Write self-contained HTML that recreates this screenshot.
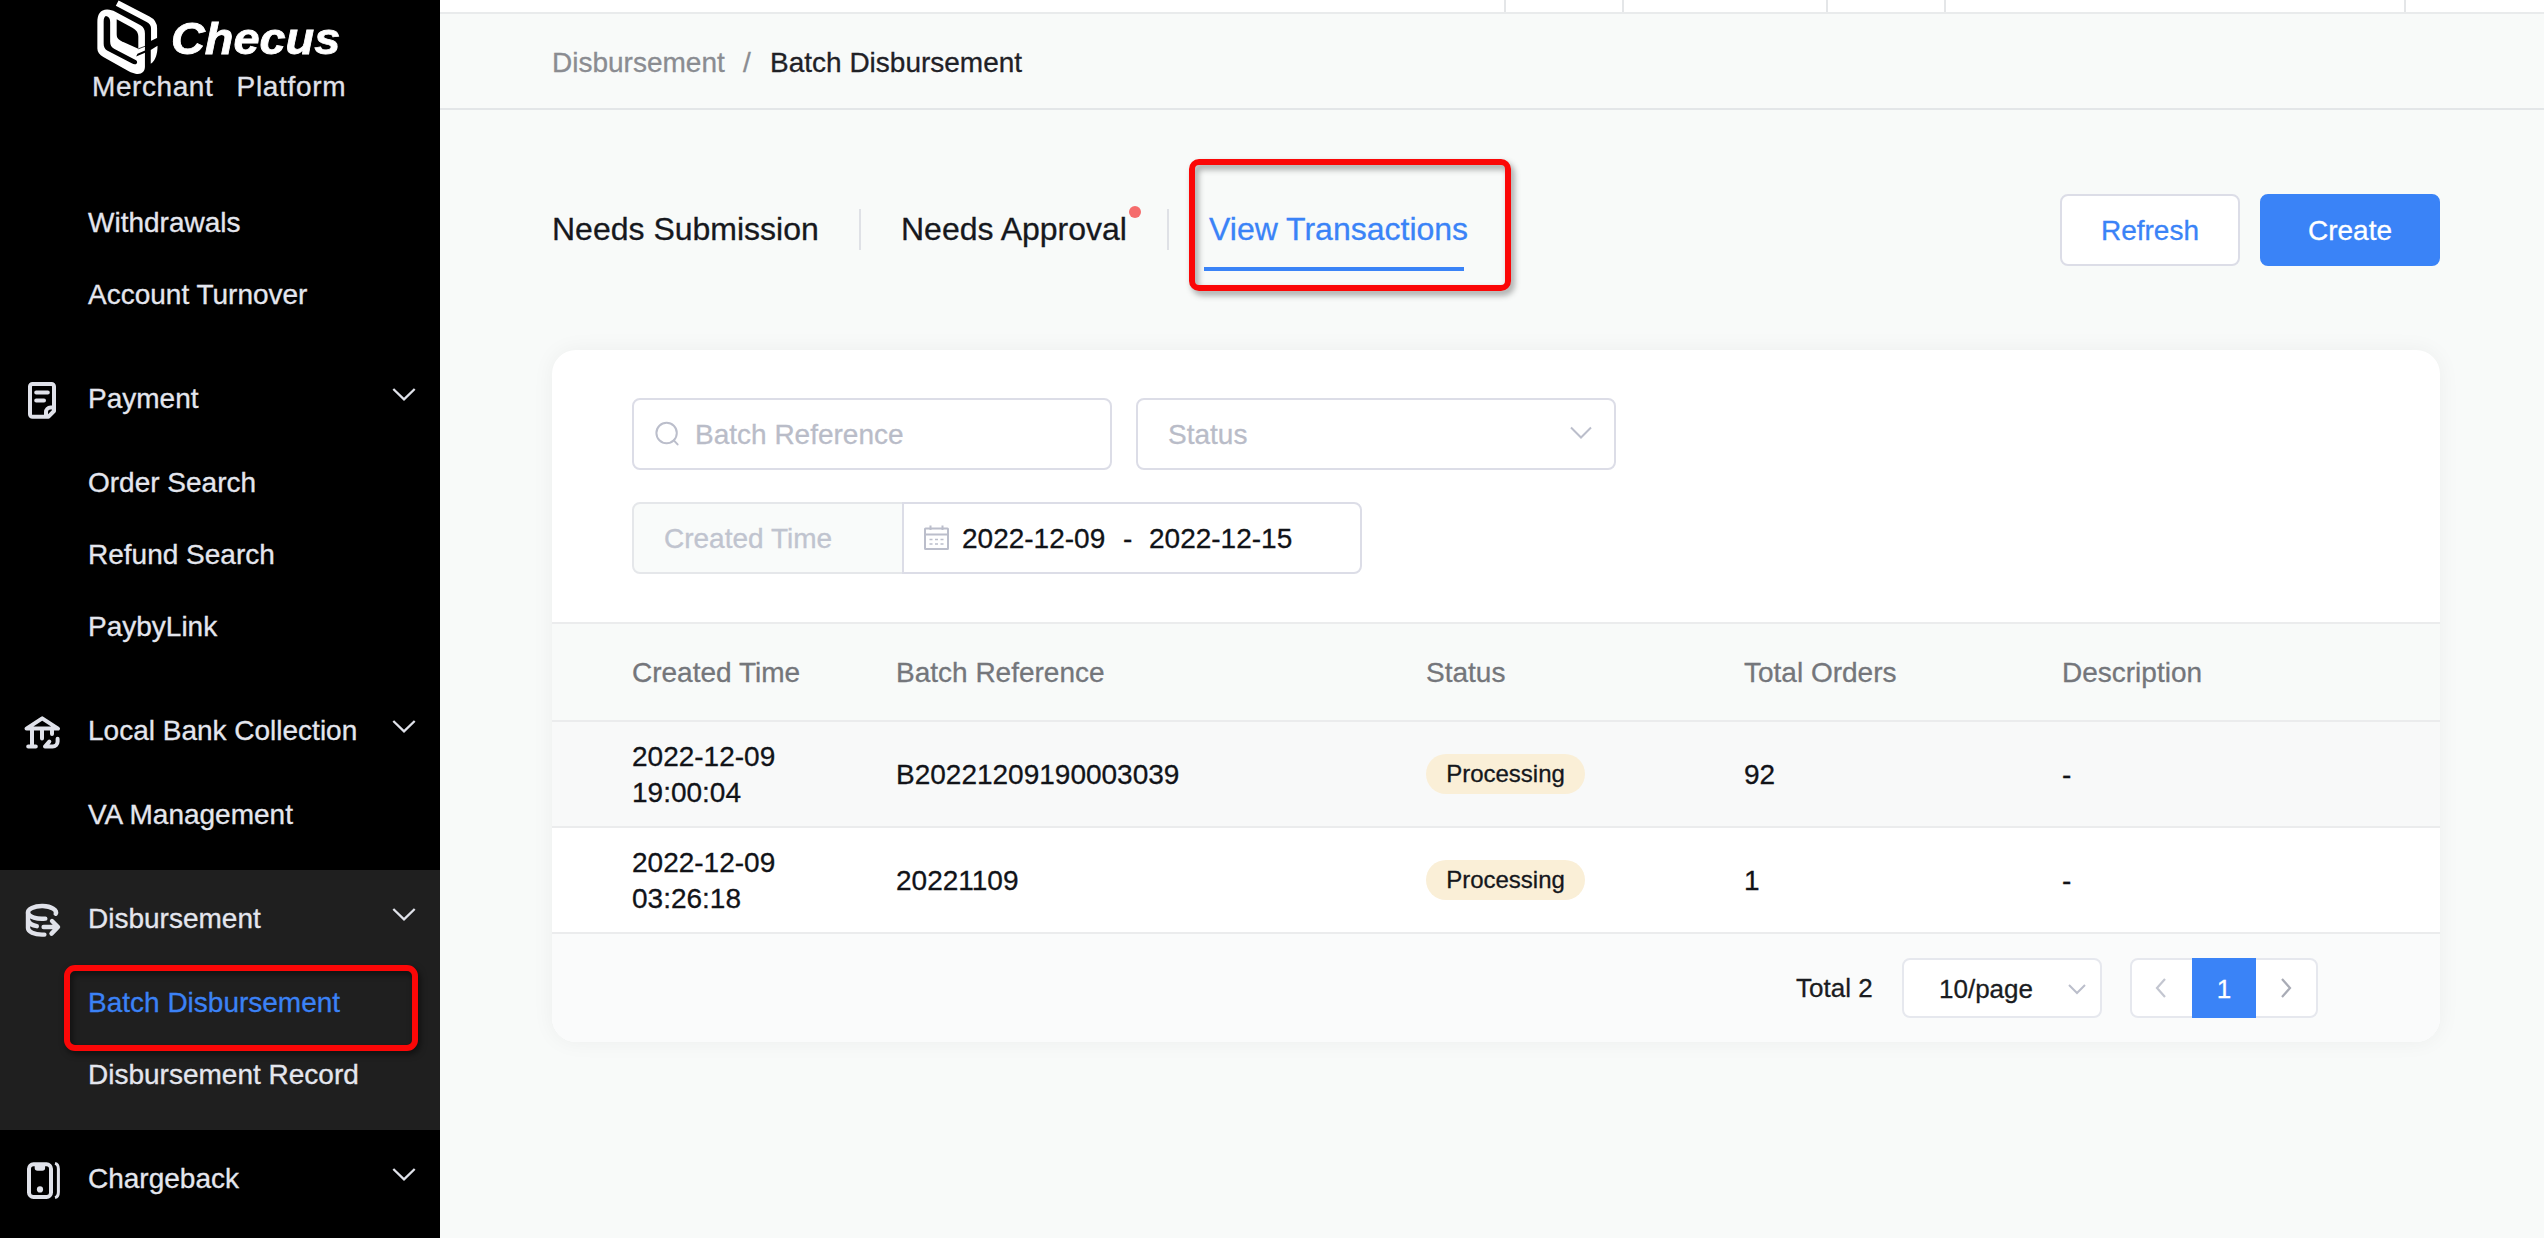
<!DOCTYPE html>
<html lang="en">
<head>
<meta charset="utf-8">
<title>Batch Disbursement</title>
<style>
*{box-sizing:border-box;margin:0;padding:0}
html,body{width:2544px;height:1238px;overflow:hidden;background:#f8faf9;font-family:"Liberation Sans",sans-serif;color:#1a1c21;-webkit-text-stroke:.3px}
.abs{position:absolute}
#side{position:absolute;left:0;top:0;width:440px;height:1238px;background:#000;overflow:hidden}
#active-bg{position:absolute;left:0;top:870px;width:440px;height:260px;background:#1f1f1f}
.m,.s{position:absolute;left:88px;font-size:28px;line-height:40px;height:40px;color:#e4e6ee;white-space:nowrap}
.chev{position:absolute;left:391px;width:26px;height:16px}
.ico{position:absolute}
#main{position:absolute;left:440px;top:0;width:2104px;height:1238px;background:#f8faf9}
#topstrip{position:absolute;left:0;top:0;width:2104px;height:14px;background:#fff;border-bottom:2px solid #e9ebec}
.vs{position:absolute;top:0;width:2px;height:12px;background:#e4e6e8}
#crumb{position:absolute;left:0;top:13px;width:2104px;height:97px;border-bottom:2px solid #e3e6e8}
#crumb span{position:absolute;top:30px;font-size:28px;line-height:40px;white-space:nowrap}
.tab{position:absolute;top:206px;font-size:32px;line-height:46px;white-space:nowrap;color:#16181d}
.tsep{position:absolute;top:209px;width:2px;height:41px;background:#dfe1e6}
.btn{position:absolute;top:194px;height:72px;border-radius:8px;font-size:28px;line-height:70px;text-align:center}
#card{position:absolute;left:112px;top:350px;width:1888px;height:692px;background:#fff;border-radius:24px;box-shadow:0 0 22px rgba(10,20,15,.05);overflow:hidden}
.inp{position:absolute;height:72px;border:2px solid #dcdde7;border-radius:8px;background:#fff;font-size:28px;line-height:70px;color:#b9bcc8;white-space:nowrap}
.th,.td{position:absolute;font-size:28px;line-height:36px;white-space:nowrap}
.th{color:#74767b}
.td{color:#111318}
.hl{position:absolute;left:0;width:1888px;height:2px;background:#ebeced}
.tag{position:absolute;left:874px;width:159px;height:40px;border-radius:20px;background:#faefd7;font-size:24px;line-height:40px;text-align:center;color:#15171c}
</style>
</head>
<body>
<div id="side">
  <div id="active-bg"></div>

  <svg class="abs" style="left:92px;top:0;width:70px;height:78px" viewBox="0 0 1111 1238">
    <path d="M400 50 L890 305 Q985 352 985 450 L985 660" fill="none" stroke="#fff" stroke-width="96" stroke-linecap="butt" stroke-linejoin="round"/>
    <path d="M905 700 L1060 622" fill="none" stroke="#000" stroke-width="62"/>
    <path d="M932 792 L1040 726 C1040 850 1010 960 932 1012 Z" fill="#fff"/>
    <path d="M85 350 C85 230 130 150 240 150 C290 150 330 165 370 185 L770 400 C820 430 840 470 840 530 L840 1060 C840 1140 780 1190 690 1170 C660 1165 620 1150 590 1135 L180 905 C120 870 85 830 85 770 Z" fill="#fff"/>
    <path d="M222 255 C270 265 288 300 288 350 L288 660 C288 720 310 750 350 772 L700 955 C725 975 720 1010 695 1018 C675 1025 655 1018 630 1005 L240 800 C200 775 185 740 185 690 L185 340 C185 290 200 262 222 255 Z" fill="#000"/>
    <path d="M392 305 L640 440 C710 480 735 520 735 590 L735 775 L470 655 C410 625 392 600 392 540 Z" fill="#000"/>
    <path d="M700 895 L722 852 L842 800 L842 838 Z" fill="#000"/>
    <path d="M735 775 L842 735" fill="none" stroke="#000" stroke-width="12"/>
  </svg>
  <div id="brand" class="abs" style="left:171px;top:12.5px;font-size:44px;line-height:52px;font-weight:bold;font-style:italic;color:#fff;white-space:nowrap;transform-origin:0 0;transform:scaleX(1.065);-webkit-text-stroke:.8px #fff">Checus</div>
  <div id="mp1" class="abs" style="left:92px;top:67px;font-size:28px;line-height:40px;color:#e0e2ea;white-space:nowrap;letter-spacing:.58px">Merchant</div>
  <div id="mp2" class="abs" style="left:236.6px;top:67px;font-size:28px;line-height:40px;color:#e0e2ea;white-space:nowrap;letter-spacing:.66px">Platform</div>

  <svg class="abs" style="left:20px;top:376px;width:44px;height:48px" viewBox="20 376 44 48" fill="none" stroke="#e0e2ea" stroke-width="4" stroke-linecap="round" stroke-linejoin="round">
    <path d="M46 416.7 H32.5 a2.5 2.5 0 0 1 -2.5 -2.5 V386.5 a2.5 2.5 0 0 1 2.5 -2.5 H51.5 a2.5 2.5 0 0 1 2.5 2.5 V411 L48.5 416.7 H46 V412 a4.5 4.5 0 0 1 4.5 -4.5 H54"/>
    <path d="M36.2 392.5 H47.8 M36.2 400.5 H44"/>
  </svg>
  <svg class="abs" style="left:20px;top:708px;width:44px;height:48px" viewBox="20 708 44 48" fill="none" stroke="#e0e2ea" stroke-width="4" stroke-linecap="round" stroke-linejoin="round">
    <path d="M26.5 728.6 L42.2 718.4 L58 728.6 Z"/>
    <path d="M32 730 V746 M28.2 746.4 H35.8 M42 730 V738.5 M52 730 V734"/>
    <path d="M57.6 738.8 V741.5 a5 5 0 0 1 -5 5 H45 L49.3 741.6"/>
  </svg>
  <svg class="abs" style="left:20px;top:896px;width:44px;height:48px" viewBox="20 896 44 48" fill="none" stroke="#e0e2ea" stroke-width="4.4" stroke-linecap="round" stroke-linejoin="round">
    <path d="M55.69 913.73 A14 6.4 0 1 0 45.30 918.62"/>
    <path d="M28 912.4 V928 A14 6.6 0 0 0 42 934.6 H44.4"/>
    <path d="M28.6 921.5 A14 6.6 0 0 0 36.8 926.2"/>
    <path d="M43.6 927 H57 M52 921 L58 927 L51.5 933.6"/>
  </svg>
  <svg class="abs" style="left:20px;top:1156px;width:44px;height:48px" viewBox="20 1156 44 48" fill="none" stroke="#e0e2ea" stroke-width="4" stroke-linecap="round" stroke-linejoin="round">
    <rect x="29" y="1164.3" width="22" height="32.6" rx="4.5"/>
    <path d="M34.7 1164 H45.1 V1168 a2.8 2.8 0 0 1 -2.8 2.8 H37.5 a2.8 2.8 0 0 1 -2.8 -2.8 Z" fill="#e0e2ea" stroke="none"/>
    <circle cx="40" cy="1189.4" r="3.1" fill="#e0e2ea" stroke="none"/>
    <path d="M55 1163.4 Q58.4 1164.2 58.4 1169 V1192 Q58.4 1196.8 55 1197.6" stroke-width="3" stroke-linecap="butt"/>
  </svg>
  <svg class="abs" style="left:388px;top:384px;width:32px;height:20px" viewBox="388 384 32 20" fill="none" stroke="#e0e2ea" stroke-width="2.3"><path d="M393.3 389 L404 399.3 L414.7 389"/></svg>
  <svg class="abs" style="left:388px;top:716px;width:32px;height:20px" viewBox="388 716 32 20" fill="none" stroke="#e0e2ea" stroke-width="2.3"><path d="M393.3 721 L404 731.3 L414.7 721"/></svg>
  <svg class="abs" style="left:388px;top:904px;width:32px;height:20px" viewBox="388 904 32 20" fill="none" stroke="#e0e2ea" stroke-width="2.3"><path d="M393.3 909 L404 919.3 L414.7 909"/></svg>
  <svg class="abs" style="left:388px;top:1164px;width:32px;height:20px" viewBox="388 1164 32 20" fill="none" stroke="#e0e2ea" stroke-width="2.3"><path d="M393.3 1169 L404 1179.3 L414.7 1169"/></svg>
  <div id="red1" class="abs" style="left:64px;top:965px;width:354px;height:86px;border:6px solid #fb0707;border-radius:11px;filter:drop-shadow(2px 3px 3px rgba(0,0,0,.55))"></div>
  <div class="m" style="top:203px">Withdrawals</div>
  <div class="m" style="top:275px">Account Turnover</div>
  <div class="m" style="top:379px">Payment</div>
  <div class="s" style="top:463px">Order Search</div>
  <div class="s" style="top:535px">Refund Search</div>
  <div class="s" style="top:607px">PaybyLink</div>
  <div class="m" style="top:711px">Local Bank Collection</div>
  <div class="s" style="top:795px">VA Management</div>
  <div class="m" style="top:899px">Disbursement</div>
  <div class="s" style="top:983px;color:#3b82f6">Batch Disbursement</div>
  <div class="s" style="top:1055px">Disbursement Record</div>
  <div class="m" style="top:1159px">Chargeback</div>
</div>
<div id="main">
  <div id="topstrip"><div class="vs" style="left:1064px"></div><div class="vs" style="left:1182px"></div><div class="vs" style="left:1386px"></div><div class="vs" style="left:1504px"></div><div class="vs" style="left:1964px"></div></div>
  <div id="crumb">
    <span id="bc1" style="left:112px;color:#8a8c91">Disbursement</span>
    <span id="bc2" style="left:303px;color:#8a8c91">/</span>
    <span id="bc3" style="left:330px;color:#1f2126">Batch Disbursement</span>
  </div>
  <div id="t1" class="tab" style="left:112px">Needs Submission</div>
  <div class="tsep" style="left:419px"></div>
  <div id="t2" class="tab" style="left:461px">Needs Approval</div>
  <div class="abs" style="left:689px;top:206px;width:12px;height:12px;border-radius:6px;background:#f56c6c"></div>
  <div class="tsep" style="left:727px"></div>
  <div id="t3" class="tab" style="left:769px;color:#3a83f7">View Transactions</div>
  <div class="abs" style="left:764px;top:267px;width:260px;height:4px;background:#3a83f7"></div>
  <div id="red2" class="abs" style="left:749px;top:159px;width:322px;height:132px;border:6px solid #fb0707;border-radius:10px;filter:drop-shadow(3px 4px 3px rgba(0,0,0,.38))"></div>
  <div id="b1" class="btn" style="left:1620px;width:180px;background:#fff;border:2px solid #dcdde7;color:#3a83f7">Refresh</div>
  <div id="b2" class="btn" style="left:1820px;width:180px;background:#3a83f7;border:2px solid #3a83f7;color:#fff">Create</div>
  <div id="card">
    <div class="inp" style="left:80px;top:48px;width:480px;padding-left:61px"><span id="ph1">Batch Reference</span></div>
    <svg class="abs" style="left:100px;top:70px;width:30px;height:30px" viewBox="0 0 30 30" fill="none" stroke="#bbbecb" stroke-width="2"><circle cx="14.6" cy="13" r="10.2"/><path d="M21.8 20.4 L25.6 24.4" stroke-linecap="round"/></svg>
    <div class="inp" style="left:584px;top:48px;width:480px;padding-left:30px"><span id="ph2">Status</span></div>
    <svg class="abs" style="left:1014px;top:72px;width:30px;height:20px" viewBox="0 0 30 20" fill="none" stroke="#bbbecb" stroke-width="2"><path d="M5 5.5 L15 15.5 L25 5.5"/></svg>
    <div class="inp" style="left:80px;top:152px;width:272px;padding-left:30px;background:#f9fbfa;border-radius:8px 0 0 8px;color:#c0c4cf;border-color:#e5e7ea"><span id="ph3">Created Time</span></div>
    <div class="inp" style="left:350px;top:152px;width:460px;border-radius:0 8px 8px 0;color:#111318"><span id="d1" class="abs" style="left:58px;top:0">2022-12-09</span><span class="abs" style="left:219px;top:0">-</span><span id="d2" class="abs" style="left:245px;top:0">2022-12-15</span></div>
    <svg class="abs" style="left:370px;top:174px;width:28px;height:28px" viewBox="0 0 28 28" fill="none" stroke="#bbbecb" stroke-width="2"><rect x="3" y="4.5" width="23" height="20.5" rx=".5"/><path d="M3 10.5 H26 M8.5 1.5 V6 M20.5 1.5 V6" /><path d="M7.5 15.5 H10.5 M13 15.5 H16 M18.5 15.5 H21.5 M7.5 20 H10.5 M13 20 H16 M18.5 20 H21.5" stroke-width="1.6"/></svg>

    <div class="abs" style="left:0;top:274px;width:1888px;height:96px;background:#f8faf9"></div>
    <div class="abs" style="left:0;top:372px;width:1888px;height:104px;background:#f8f9f9"></div>
    <div class="abs" style="left:0;top:584px;width:1888px;height:108px;background:#fafbfb"></div>
    <div class="hl" style="top:272px"></div>
    <div class="hl" style="top:370px"></div>
    <div class="hl" style="top:476px"></div>
    <div class="hl" style="top:582px"></div>

    <div class="th" style="left:80px;top:305px">Created Time</div>
    <div class="th" style="left:344px;top:305px">Batch Reference</div>
    <div class="th" style="left:874px;top:305px">Status</div>
    <div class="th" style="left:1192px;top:305px">Total Orders</div>
    <div class="th" style="left:1510px;top:305px">Description</div>

    <div class="td" style="left:80px;top:389px">2022-12-09<br>19:00:04</div>
    <div class="td" style="left:344px;top:407px">B20221209190003039</div>
    <div class="tag" style="top:404px">Processing</div>
    <div class="td" style="left:1192px;top:407px">92</div>
    <div class="td" style="left:1510px;top:407px">-</div>

    <div class="td" style="left:80px;top:495px">2022-12-09<br>03:26:18</div>
    <div class="td" style="left:344px;top:513px">20221109</div>
    <div class="tag" style="top:510px">Processing</div>
    <div class="td" style="left:1192px;top:513px">1</div>
    <div class="td" style="left:1510px;top:513px">-</div>

    <div id="tot" class="td" style="left:1244px;top:618px;line-height:40px;font-size:26px;color:#1a1c21">Total 2</div>
    <div class="abs" style="left:1350px;top:608px;width:200px;height:60px;border:2px solid #e6e8ee;border-radius:8px;background:#fff"></div>
    <div id="pp" class="td" style="left:1387px;top:619px;line-height:40px;font-size:26px;color:#1a1c21">10/page</div>
    <svg class="abs" style="left:1512px;top:630px;width:26px;height:18px" viewBox="0 0 26 18" fill="none" stroke="#bbbecb" stroke-width="2"><path d="M5 5 L13 13 L21 5"/></svg>
    <div class="abs" style="left:1578px;top:608px;width:188px;height:60px;border:2px solid #e6e8ee;border-radius:8px;background:#fff"></div>
    <div class="abs" style="left:1640px;top:608px;width:64px;height:60px;background:#3a83f7;color:#fff;font-size:26px;line-height:62px;text-align:center">1</div>
    <svg class="abs" style="left:1598px;top:626px;width:24px;height:24px" viewBox="0 0 24 24" fill="none" stroke="#c3c6d0" stroke-width="2.2"><path d="M15 3 L7 12 L15 21"/></svg>
    <svg class="abs" style="left:1722px;top:626px;width:24px;height:24px" viewBox="0 0 24 24" fill="none" stroke="#a9acb6" stroke-width="2.2"><path d="M8 3 L16 12 L8 21"/></svg>
  </div>
</div>
</body>
</html>
